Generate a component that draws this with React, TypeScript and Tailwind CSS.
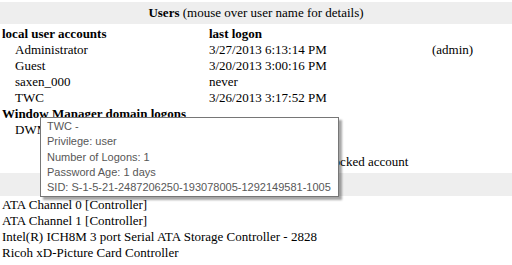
import React from "react";

const users = [
  { name: "Administrator", logon: "3/27/2013 6:13:14 PM", extra: "(admin)" },
  { name: "Guest", logon: "3/20/2013 3:00:16 PM", extra: "" },
  { name: "saxen_000", logon: "never", extra: "" },
  { name: "TWC", logon: "3/26/2013 3:17:52 PM", extra: "" },
];

export default function App() {
  return (
    <div
      className="relative w-[512px] h-[265px] overflow-hidden bg-white text-black text-[13px] leading-[16px]"
      style={{ fontFamily: '"Liberation Serif", "Times New Roman", serif' }}
    >
      <div className="pt-[2px]">
        <div className="h-[22px] bg-[#eeeeee] flex items-center justify-center">
          <span>
            <b>Users</b> (mouse over user name for details)
          </span>
        </div>
        <div className="pt-[2px] grid grid-cols-[207px_223px_1fr] pl-[2px]">
          <div className="font-bold h-[16px]">local user accounts</div>
          <div className="font-bold h-[16px]">last logon</div>
          <div className="h-[16px]"></div>
          {users.map((u) => (
            <React.Fragment key={u.name}>
              <div className="pl-[13px] h-[16px]">{u.name}</div>
              <div className="h-[16px]">{u.logon}</div>
              <div className="h-[16px]">{u.extra}</div>
            </React.Fragment>
          ))}
          <div className="col-span-3 font-bold h-[16px]">Window Manager domain logons</div>
          <div className="col-span-3 pl-[13px] h-[16px]">DWM-1</div>
          <div className="col-span-3 h-[16px]"></div>
          <div className="col-span-3 h-[16px] pl-[328px]">locked account</div>
        </div>
        <div className="mt-[3px] h-[23px] bg-[#eeeeee] flex items-center justify-center">
          <b>Storage</b>
        </div>
        <div className="pt-[1px] pl-[2px] flex flex-col">
          <div className="h-[16px]">ATA Channel 0 [Controller]</div>
          <div className="h-[16px]">ATA Channel 1 [Controller]</div>
          <div className="h-[16px]">Intel(R) ICH8M 3 port Serial ATA Storage Controller - 2828</div>
          <div className="h-[16px]">Ricoh xD-Picture Card Controller</div>
        </div>
      </div>

      <div
        className="absolute left-[40px] top-[117px] w-[299px] h-[80px] bg-white border border-[#767676] pl-[6px] pt-[1px] text-[11px] leading-[15.3px] text-[#575757] whitespace-nowrap shadow-[3px_3px_2px_rgba(0,0,0,0.35)]"
        style={{ fontFamily: '"Liberation Sans", Arial, sans-serif' }}
      >
        <div>TWC -</div>
        <div>Privilege: user</div>
        <div>Number of Logons: 1</div>
        <div>Password Age: 1 days</div>
        <div>SID: S-1-5-21-2487206250-193078005-1292149581-1005</div>
      </div>
    </div>
  );
}
